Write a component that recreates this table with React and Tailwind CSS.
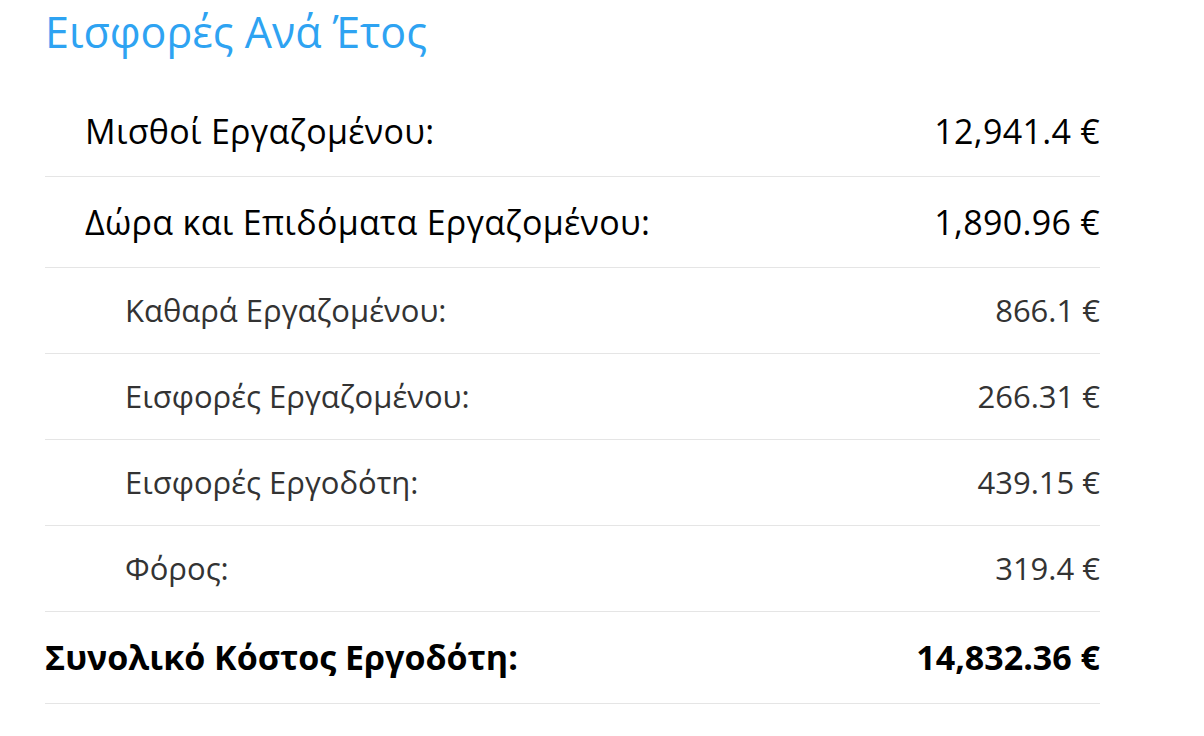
import React from 'react';

const rows = [
  { label: 'Μισθοί Εργαζομένου:', value: '12,941.4 €', kind: 'main', h: 'h-[91px]' },
  { label: 'Δώρα και Επιδόματα Εργαζομένου:', value: '1,890.96 €', kind: 'main', h: 'h-[91px]' },
  { label: 'Καθαρά Εργαζομένου:', value: '866.1 €', kind: 'sub', h: 'h-[86px]' },
  { label: 'Εισφορές Εργαζομένου:', value: '266.31 €', kind: 'sub', h: 'h-[86px]' },
  { label: 'Εισφορές Εργοδότη:', value: '439.15 €', kind: 'sub', h: 'h-[86px]' },
  { label: 'Φόρος:', value: '319.4 €', kind: 'sub', h: 'h-[86px]' },
  { label: 'Συνολικό Κόστος Εργοδότη:', value: '14,832.36 €', kind: 'total', h: 'h-[92px]' },
];

const App = () => {
  return (
    <div className="bg-white min-h-[736px] w-[1204px] font-['Open_Sans',sans-serif]">
      <div className="ml-[45px] w-[1055px]">
        <h2 className="h-[86px] pt-[4px] text-[43px] leading-[56px] text-[#2ea3f2] font-normal">
          Εισφορές Ανά Έτος
        </h2>
        <div className="flex flex-col">
          {rows.map((row, i) => (
            <div
              key={i}
              className={`${row.h} flex items-center justify-between border-b border-[#e5e5e5] ${
                row.kind === 'main'
                  ? 'pl-[40px] text-[34px] tracking-[0.3px] text-black'
                  : row.kind === 'sub'
                  ? 'pl-[80px] text-[31px] text-[#333]'
                  : 'text-[34px] font-bold text-black'
              }`}
            >
              <span>{row.label}</span>
              <span>{row.value}</span>
            </div>
          ))}
        </div>
      </div>
    </div>
  );
};

export default App;
